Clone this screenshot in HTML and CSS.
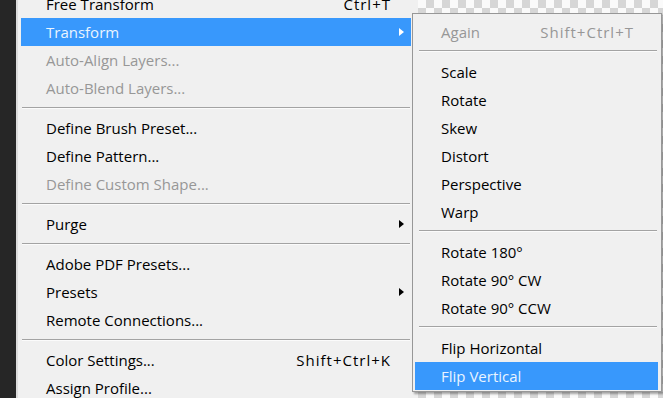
FILE: index.html
```html
<!DOCTYPE html>
<html lang="en">
<head>
  <meta charset="UTF-8" />
  <title>Edit menu - Transform</title>
  <link rel="stylesheet" href="styles.css">
</head>
<body>
  <div class="screen">
    <!-- left tool strip -->
    <div class="dock"></div>

    <!-- Edit menu -->
    <div class="menu main">
      <div class="item"><span class="label">Free Transform</span><span class="keys">Ctrl+T</span><span class="arrow"></span></div>
      <div class="item active"><span class="label">Transform</span><span class="keys"></span><span class="arrow"><i class="tri"></i></span></div>
      <div class="item off"><span class="label">Auto-Align Layers...</span></div>
      <div class="item off"><span class="label">Auto-Blend Layers...</span></div>
      <div class="sep"></div>
      <div class="item"><span class="label">Define Brush Preset...</span></div>
      <div class="item"><span class="label">Define Pattern...</span></div>
      <div class="item off"><span class="label">Define Custom Shape...</span></div>
      <div class="sep"></div>
      <div class="item"><span class="label">Purge</span><span class="keys"></span><span class="arrow"><i class="tri"></i></span></div>
      <div class="sep"></div>
      <div class="item"><span class="label">Adobe PDF Presets...</span></div>
      <div class="item"><span class="label">Presets</span><span class="keys"></span><span class="arrow"><i class="tri"></i></span></div>
      <div class="item"><span class="label">Remote Connections...</span></div>
      <div class="sep"></div>
      <div class="item"><span class="label">Color Settings...</span><span class="keys">Shift+Ctrl+K</span><span class="arrow"></span></div>
      <div class="item"><span class="label">Assign Profile...</span></div>
    </div>

    <!-- document canvas with the Transform submenu -->
    <div class="canvas">
      <div class="menu sub">
        <div class="item off"><span class="label">Again</span><span class="keys">Shift+Ctrl+T</span></div>
        <div class="sep"></div>
        <div class="item"><span class="label">Scale</span></div>
        <div class="item"><span class="label">Rotate</span></div>
        <div class="item"><span class="label">Skew</span></div>
        <div class="item"><span class="label">Distort</span></div>
        <div class="item"><span class="label">Perspective</span></div>
        <div class="item"><span class="label">Warp</span></div>
        <div class="sep"></div>
        <div class="item"><span class="label">Rotate 180°</span></div>
        <div class="item"><span class="label">Rotate 90° CW</span></div>
        <div class="item"><span class="label">Rotate 90° CCW</span></div>
        <div class="sep"></div>
        <div class="item"><span class="label">Flip Horizontal</span></div>
        <div class="item active"><span class="label">Flip Vertical</span></div>
      </div>
    </div>
  </div>
</body>
</html>
```

FILE: styles.css
```css
body {
  margin: 0;
  font-family: 'Open Sans', 'Noto Sans', sans-serif;
  font-size: 15px;
  color: #000;
}
.screen {
  display: flex;
  width: 663px;
  height: 398px;
  overflow: hidden;
  background-color: #f0f0f0;
}
/* dark tools panel on the left */
.dock {
  width: 16px;
  flex-shrink: 0;
  background-color: #262626;
}
.menu {
  background-color: #f0f0f0;
  box-sizing: border-box;
}
.main {
  width: 402px;
  flex-shrink: 0;
  margin-top: -10px;
  padding: 0 7px 0 3px;
  border-left: 2px solid #dcdcdc;
}
.item {
  display: flex;
  align-items: center;
  height: 28px;
  padding-left: 25px;
  white-space: nowrap;
}
.label {
  flex: 1;
}
.keys {
  text-align: right;
  letter-spacing: 1px;
}
.arrow {
  width: 20px;
  display: flex;
  justify-content: flex-end;
  padding-right: 7px;
  box-sizing: border-box;
}
.tri {
  width: 0;
  height: 0;
  border-top: 4px solid transparent;
  border-bottom: 4px solid transparent;
  border-left: 5px solid #000;
}
.item.off {
  color: #979797;
}
.item.active {
  background-color: #3898fc;
  color: #eaf4ff;
}
.item.active .tri {
  border-left-color: #fff;
}
.sep {
  margin: 5px 1px 5px 1px;
  border-top: 1px solid #a3a3a3;
  border-bottom: 1px solid #fbfbfb;
}
/* transparent document behind the submenu */
.canvas {
  flex: 1;
  background-color: #fff;
  background-image: repeating-conic-gradient(#d6d6d6 0 25%, #fafafa 0 50%);
  background-size: 16px 16px;
}
.sub {
  position: relative;
  z-index: 2;
  width: 250px;
  height: 379px;
  margin: 13px 0 0 -6px;
  padding: 4px 3px 1px 2px;
  border: 1px solid #979797;
  box-shadow: 2px 2px 2px rgba(0, 0, 0, 0.35);
}
.sub .item {
  padding-left: 26px;
  padding-right: 24px;
}
.sub .sep {
  margin: 4px 1px 6px 4px;
}
```
